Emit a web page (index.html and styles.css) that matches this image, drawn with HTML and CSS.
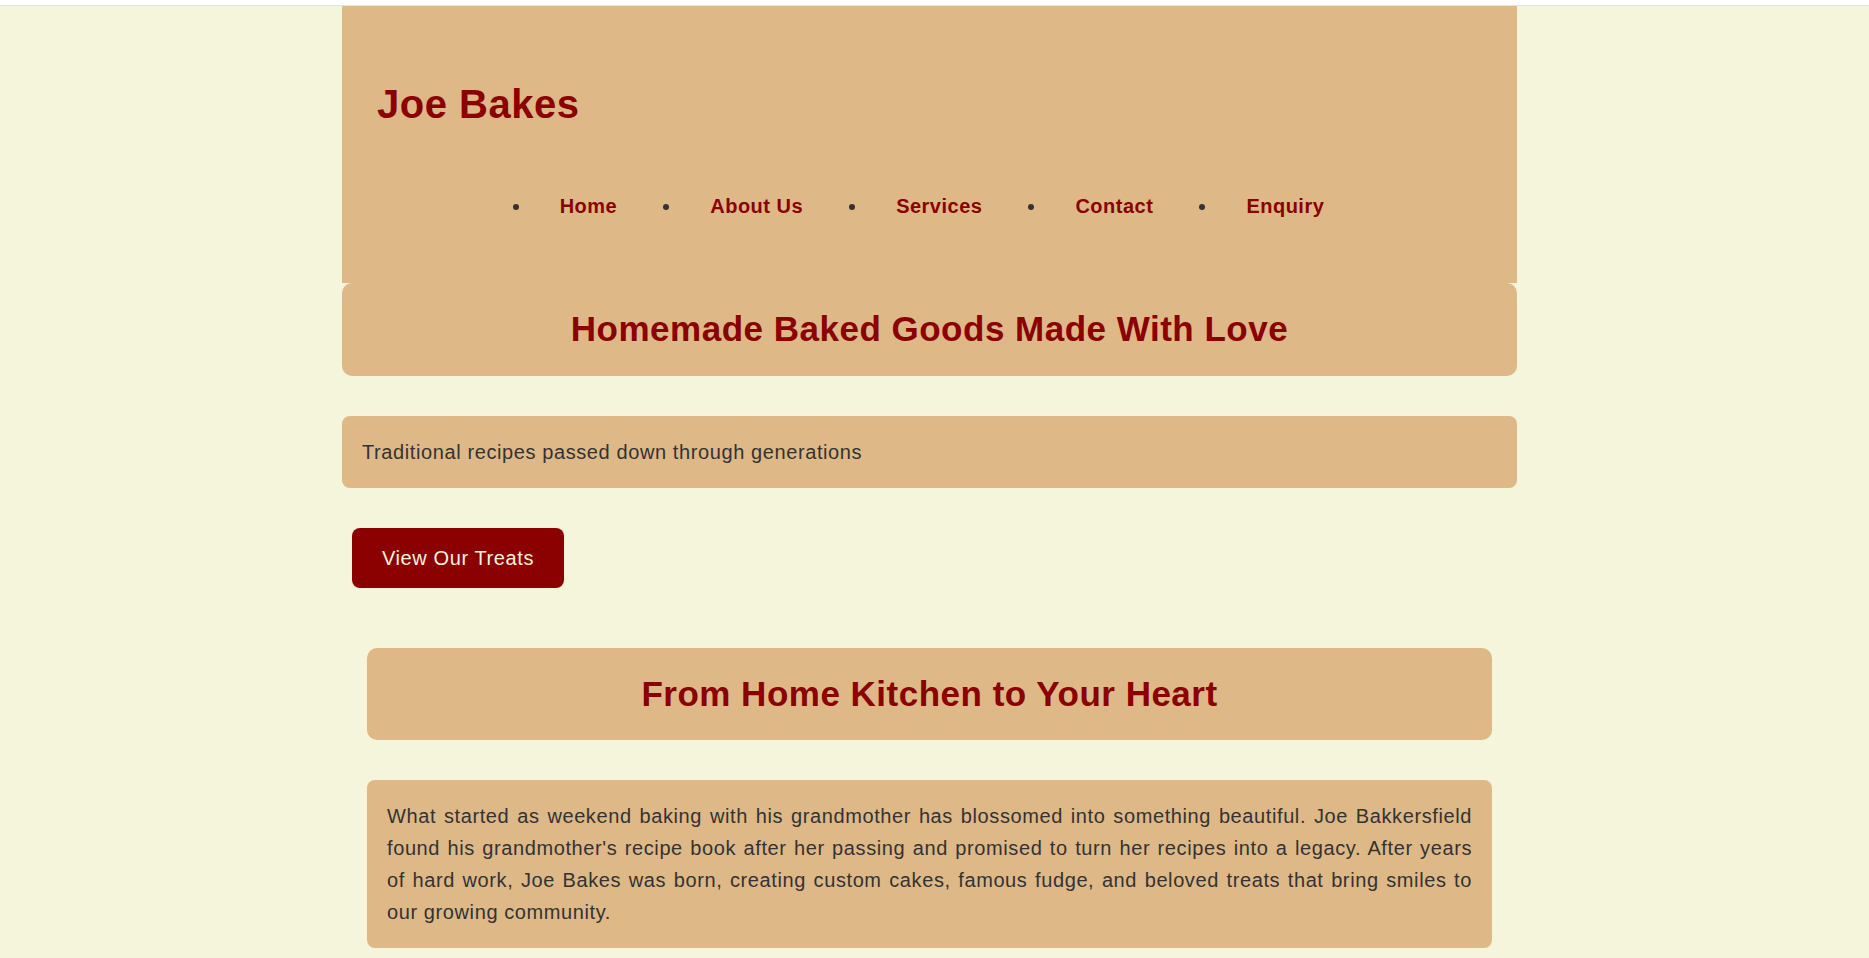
FILE: index.html
```html
<!DOCTYPE html>
<html lang="en">
<head>
<meta charset="utf-8">
<title>Joe Bakes</title>
<link rel="stylesheet" href="styles.css">
</head>
<body>
<div class="topbar"></div>
<div class="page">
  <header class="site-header">
    <h1 class="logo">Joe Bakes</h1>
    <nav>
      <ul class="nav-list">
        <li><a href="#">Home</a></li>
        <li><a href="#">About Us</a></li>
        <li><a href="#">Services</a></li>
        <li><a href="#">Contact</a></li>
        <li><a href="#">Enquiry</a></li>
      </ul>
    </nav>
  </header>
  <section class="hero">
    <h2 class="box-title">Homemade Baked Goods Made With Love</h2>
    <p class="box-text">Traditional recipes passed down through generations</p>
    <button class="cta">View Our Treats</button>
  </section>
  <section class="story">
    <h2 class="box-title story-title">From Home Kitchen to Your Heart</h2>
    <p class="box-text justify">What started as weekend baking with his grandmother has blossomed into something beautiful. Joe Bakkersfield found his grandmother's recipe book after her passing and promised to turn her recipes into a legacy. After years of hard work, Joe Bakes was born, creating custom cakes, famous fudge, and beloved treats that bring smiles to our growing community.</p>
  </section>
</div>
</body>
</html>
```

FILE: styles.css
```css
html, body {
  margin: 0;
  padding: 0;
}
body {
  background: #f5f5dc;
  color: #333333;
  font-family: "Liberation Sans", Arial, sans-serif;
  font-size: 20px;
  letter-spacing: 0.5px;
}
.topbar {
  height: 5px;
  background: #ffffff;
  border-bottom: 1px solid #e3e3e3;
}
.page {
  width: 1175px;
  margin-left: 342px;
}
.site-header {
  background: #deb887;
  padding: 75px 35px 65px;
}
.logo {
  margin: 0 0 68px;
  font-size: 40px;
  line-height: 46px;
  color: #8b0000;
}
.nav-list {
  display: flex;
  justify-content: center;
  gap: 65px;
  margin: 0;
  padding: 0 3px 0 0;
  list-style: disc outside;
}
.nav-list li {
  padding-left: 28px;
  line-height: 23px;
}
.nav-list a {
  color: #8b0000;
  font-weight: bold;
  text-decoration: none;
}
.box-title {
  margin: 0;
  background: #deb887;
  border-radius: 10px;
  padding: 26px 25px 27px;
  text-align: center;
  font-size: 35px;
  line-height: 40px;
  color: #8b0000;
}
.story-title {
  padding-bottom: 26px;
}
.box-text {
  margin: 40px 0 0;
  background: #deb887;
  border-radius: 8px;
  padding: 20px;
  line-height: 32px;
  letter-spacing: 0.6px;
}
.justify {
  text-align: justify;
}
.cta {
  display: block;
  margin: 40px 0 0 10px;
  padding: 18px 30px;
  background: #8b0000;
  color: #f5f5dc;
  border: none;
  border-radius: 8px;
  font-family: inherit;
  font-size: 20px;
  line-height: 24px;
  letter-spacing: 0.6px;
}
.story {
  margin-top: 60px;
  padding: 0 25px;
}
```
